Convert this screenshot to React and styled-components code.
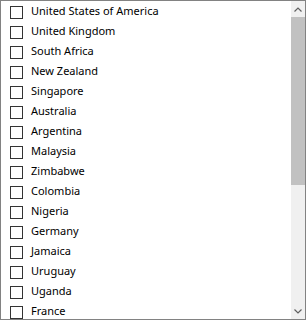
import React from "react";
import styled, { createGlobalStyle } from "styled-components";

const GlobalStyle = createGlobalStyle`
  html, body {
    margin: 0;
    padding: 0;
    background: #fff;
  }
  * {
    box-sizing: border-box;
  }
`;

// --Outer list box frame
const ListBox = styled.div`
  width: 306px;
  height: 320px;
  border: 1px solid #828282;
  display: flex;
  background: #fff;
  overflow: hidden;
  font-family: "Noto Sans", "Liberation Sans", sans-serif;
  font-size: 11px;
  line-height: 14px;
  color: #000;
`;

const Items = styled.div`
  flex: 1;
  padding: 1px 0 0 9px;
  overflow: hidden;
`;

const Row = styled.label`
  display: flex;
  align-items: center;
  height: 20px;
  gap: 8px;
  white-space: nowrap;
`;

const Box = styled.span`
  width: 13px;
  height: 13px;
  flex: none;
  border: 1px solid #333;
  background: ${(p) => (p.checked ? "#cce4f7" : "#fff")};
`;

const Label = styled.span`
  position: relative;
  top: -1px;
`;

// --Fake scrollbar on the right side
const ScrollBar = styled.div`
  width: 14px;
  flex: none;
  display: flex;
  flex-direction: column;
  background: #f0f0f0;
`;

const Arrow = styled.div`
  height: 16px;
  display: flex;
  align-items: center;
  justify-content: center;
  flex: none;
`;

const Track = styled.div`
  flex: 1;
  display: flex;
  flex-direction: column;
`;

const Thumb = styled.div`
  height: 168px;
  background: #c1c1c1;
`;

const countries = [
  "United States of America",
  "United Kingdom",
  "South Africa",
  "New Zealand",
  "Singapore",
  "Australia",
  "Argentina",
  "Malaysia",
  "Zimbabwe",
  "Colombia",
  "Nigeria",
  "Germany",
  "Jamaica",
  "Uruguay",
  "Uganda",
  "France",
  "Italy",
];

const Chevron = ({ up }) => (
  <svg width="8" height="5" viewBox="0 0 8 5">
    <path
      d={up ? "M0.5 4.5 L4 1 L7.5 4.5" : "M0.5 0.5 L4 4 L7.5 0.5"}
      fill="none"
      stroke="#606060"
      strokeWidth="1.2"
    />
  </svg>
);

const App = () => {
  return (
    <>
      <GlobalStyle />
      <ListBox>
        <Items>
          {countries.map((c) => (
            <Row key={c}>
              <Box />
              <Label>{c}</Label>
            </Row>
          ))}
        </Items>
        <ScrollBar>
          <Arrow>
            <Chevron up />
          </Arrow>
          <Track>
            <Thumb />
          </Track>
          <Arrow>
            <Chevron />
          </Arrow>
        </ScrollBar>
      </ListBox>
    </>
  );
};

export default App;
